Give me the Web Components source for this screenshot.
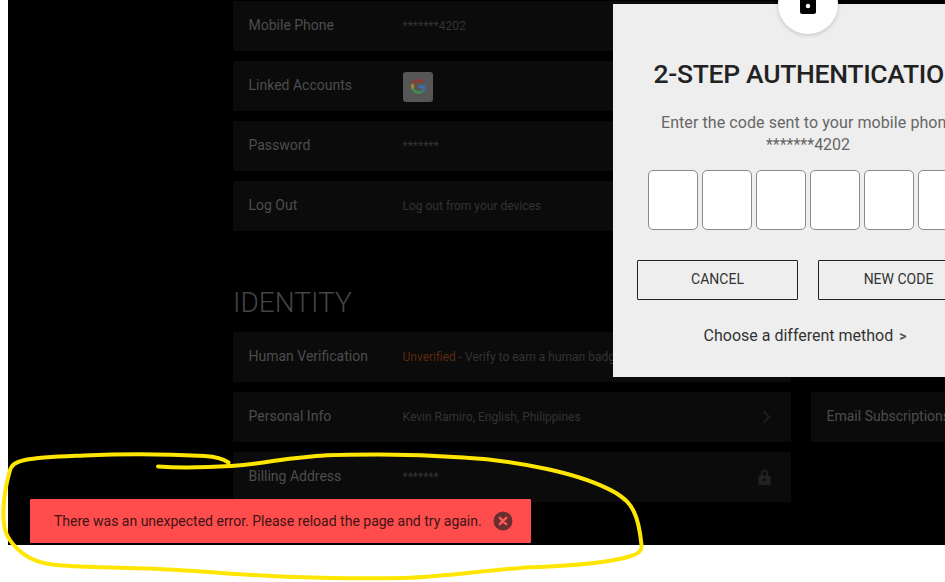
<!DOCTYPE html>
<html lang="en"><head><meta charset="utf-8"><title>Account</title>
<style>
html,body{background:#fff;height:582px;overflow:hidden}
body{margin:0 0 0 8px;font-family:Roboto,"Liberation Sans",sans-serif}
</style></head><body>
<account-stage>
  <settings-col>
    <set-row label="Mobile Phone" value="*******4202"></set-row>
    <set-row label="Linked Accounts"><google-tile></google-tile></set-row>
    <set-row label="Password" value="*******"></set-row>
    <set-row label="Log Out" value="Log out from your devices"></set-row>
    <sec-head>IDENTITY</sec-head>
    <set-row label="Human Verification"><span style="color:#5c2a0f">Unverified</span> - Verify to earn a human badge</set-row>
    <set-row label="Personal Info" value="Kevin Ramiro, English, Philippines" icon="chevron"></set-row>
    <set-row label="Billing Address" value="*******" icon="lock"></set-row>
  </settings-col>
  <side-col><set-row label="Email Subscriptions"></set-row></side-col>
  <auth-modal></auth-modal>
  <error-toast>There was an unexpected error. Please reload the page and try again.</error-toast>
</account-stage>
<marker-scribble></marker-scribble>
<script>
const def=(n,html)=>customElements.define(n,class extends HTMLElement{
  connectedCallback(){ if(this.shadowRoot)return; const r=this.attachShadow({mode:'open'}); r.innerHTML=typeof html==='function'?html(this):html; }
});
def('account-stage',`<style>:host{display:flex;position:relative;width:937px;height:545px;background:#000;overflow:hidden;padding:1px 0 0 225px;box-sizing:border-box;gap:20px}</style><slot></slot>`);
def('settings-col',`<style>:host{display:flex;flex-direction:column;gap:10px;width:558px;flex:none}</style><slot></slot>`);
def('side-col',`<style>:host{display:flex;flex-direction:column;width:400px;flex:none;padding-top:391px;box-sizing:border-box}</style><slot></slot>`);
def('sec-head',`<style>:host{display:block;font:300 28px/32px Roboto,sans-serif;color:#454545;margin:46px 0 3px 0;letter-spacing:0}</style><slot></slot>`);
const icons={
 chevron:`<svg width="9" height="14" viewBox="0 0 9 14" fill="none" stroke="#1e1e1e" stroke-width="2"><path d="M1.500 1.200 7.300 7l-5.800 5.800"/></svg>`,
 lock:`<svg width="13" height="16" viewBox="0 0 13 15" fill="#222" preserveAspectRatio="none"><path d="M3 6V4a3.500 3.500 0 0 1 7 0v2h1.500a1 1 0 0 1 1 1v7a1 1 0 0 1-1 1h-10a1 1 0 0 1-1-1V7a1 1 0 0 1 1-1Zm1.700 0h3.600V4a1.800 1.800 0 0 0-3.600 0Z"/><circle cx="6.500" cy="10.300" r="1.400" fill="#0b0b0b"/></svg>`};
def('set-row',h=>`<style>:host{display:flex;align-items:center;height:50px;background:#0b0b0b;flex:none;padding:0 20.5px 2px 15.5px;box-sizing:border-box}
.l{width:154px;flex:none;font-size:14px;color:#4d4d4d;white-space:nowrap}.v{flex:1;font-size:12px;color:#333;white-space:nowrap;min-width:0;padding-top:1px}.i{display:flex;margin-top:2px}</style>
<div class="l">${h.getAttribute('label')}</div><div class="v">${h.getAttribute('value')||''}<slot></slot></div>${h.getAttribute('icon')?`<div class="i">${icons[h.getAttribute('icon')]}</div>`:''}`);
def('google-tile',`<style>:host{display:flex;align-items:center;justify-content:center;width:30px;height:30px;border-radius:3px;background:#565656;margin:2px 0 0 .5px}</style>
<svg width="15" height="15" viewBox="0 0 48 48"><path fill="#8f3b32" d="M24 9.500c3.540 0 6.710 1.220 9.210 3.600l6.850-6.850C35.900 2.380 30.470 0 24 0 14.620 0 6.510 5.380 2.560 13.220l7.980 6.190C12.430 13.720 17.740 9.500 24 9.500z"/><path fill="#3e6aa5" d="M46.980 24.550c0-1.570-.15-3.090-.38-4.550H24v9.020h12.940c-.58 2.960-2.260 5.480-4.780 7.180l7.730 6c4.510-4.180 7.090-10.360 7.090-17.650z"/><path fill="#a38a2c" d="M10.530 28.590c-.48-1.450-.76-2.990-.76-4.590s.27-3.140.76-4.590l-7.980-6.190C.92 16.460 0 20.120 0 24c0 3.880.92 7.540 2.560 10.780l7.970-6.190z"/><path fill="#3f8a50" d="M24 48c6.480 0 11.930-2.130 15.890-5.810l-7.730-6c-2.150 1.450-4.920 2.300-8.160 2.300-6.260 0-11.570-4.220-13.470-9.910l-7.980 6.190C6.510 42.620 14.620 48 24 48z"/></svg>`);
def('code-box',`<style>:host{display:block;width:50px;height:60px;flex:none;background:#fff;border:1px solid #8a8a8a;border-radius:5px;box-sizing:border-box}</style>`);
def('outline-btn',`<style>:host{display:flex;align-items:center;justify-content:center;width:161px;height:40px;flex:none;box-sizing:border-box;border:1px solid #222;border-radius:1px;font-size:14px;color:#333;padding-bottom:2px}</style><slot></slot>`);
def('auth-modal',`<style>:host{position:absolute;left:605px;top:4px;width:390px;height:373px;background:#eee;display:flex;flex-direction:column;align-items:center;box-sizing:border-box;padding-top:52px;color:#666}
.badge{position:absolute;left:165px;top:-30px;width:60px;height:60px;border-radius:50%;background:#fff;box-shadow:0 1px 4px rgba(0,0,0,.2);display:flex;align-items:flex-end;justify-content:center}
.badge svg{margin-bottom:20px}
h2{margin:0;font:500 26.5px/36px Roboto,sans-serif;color:#222;white-space:nowrap;letter-spacing:-.3px}
p{margin:20px 0 0;font-size:16px;line-height:22px;text-align:center;white-space:nowrap}p span{letter-spacing:.08px}
.codes{display:flex;gap:4px;margin-top:14px}.btns{display:flex;gap:20px;margin-top:30px}
.alt{margin:26px 6px 0 0;font-size:16px;line-height:19px;color:#333}.alt b{font-weight:700;font-size:14px;color:#555;margin-left:2px}</style>
<div class="badge"><svg width="16" height="16" viewBox="0 0 16 16"><rect width="16" height="16" rx="2.500" fill="#000"/><circle cx="8" cy="8" r="2.200" fill="#fff"/></svg></div>
<h2>2-STEP AUTHENTICATION</h2>
<p><span>Enter the code sent to your mobile phone</span><br>*******4202</p>
<div class="codes"><code-box></code-box><code-box></code-box><code-box></code-box><code-box></code-box><code-box></code-box><code-box></code-box></div>
<div class="btns"><outline-btn>CANCEL</outline-btn><outline-btn>NEW CODE</outline-btn></div>
<div class="alt">Choose a different method <b>&gt;</b></div>`);
def('error-toast',`<style>:host{position:absolute;left:22px;top:499px;width:501px;height:44px;background:#ff4d4d;border-radius:1px;display:flex;align-items:center;box-sizing:border-box;padding-left:24px;font-size:14px;color:#3d1414;white-space:nowrap}
svg{position:absolute;left:463px;top:12px}</style><slot></slot>
<svg width="20" height="20" viewBox="0 0 20 20"><circle cx="10" cy="10" r="9.500" fill="#6b2e2e"/><path d="M6.800 6.800l6.400 6.400M13.200 6.800l-6.400 6.400" stroke="#ff5a5a" stroke-width="2.400" stroke-linecap="round"/></svg>`);
def('marker-scribble',`<style>:host{position:absolute;left:0;top:0;width:945px;height:582px;pointer-events:none}svg{display:block}</style>
<svg width="945" height="582" viewBox="0 0 945 582" fill="none"><path stroke="#ffe600" stroke-width="4" stroke-linecap="round" stroke-linejoin="round" d="M228.500 462.500C222 458 214 456.500 205 456C165 454 120 454 84 455.500C60 456.500 40 457 25 460C15 462 11 465 9.500 472C5 488 3 505 3.500 518C4 532 8 541 21 552C32 561 44 564 62 565.500C100 568 130 567.500 168 569.500C215 572 255 576 295 577C335 578.500 370 578.500 405 578C440 577 480 571 526 567.500C570 566 610 563 631 556C640 553 642 550 641.500 545C640 530 638 520 634 512C630 503 625 499 616 493C595 481 570 474 547 469C520 463 490 459 463 457.500C435 455.500 405 454.500 379 454.500C355 454.500 335 454.500 316 456C300 457.500 288 458.500 273 461C258 463.500 247 465 231 466C205 467.500 180 468 158 466.500"/></svg>`);
</script>
</body></html>
